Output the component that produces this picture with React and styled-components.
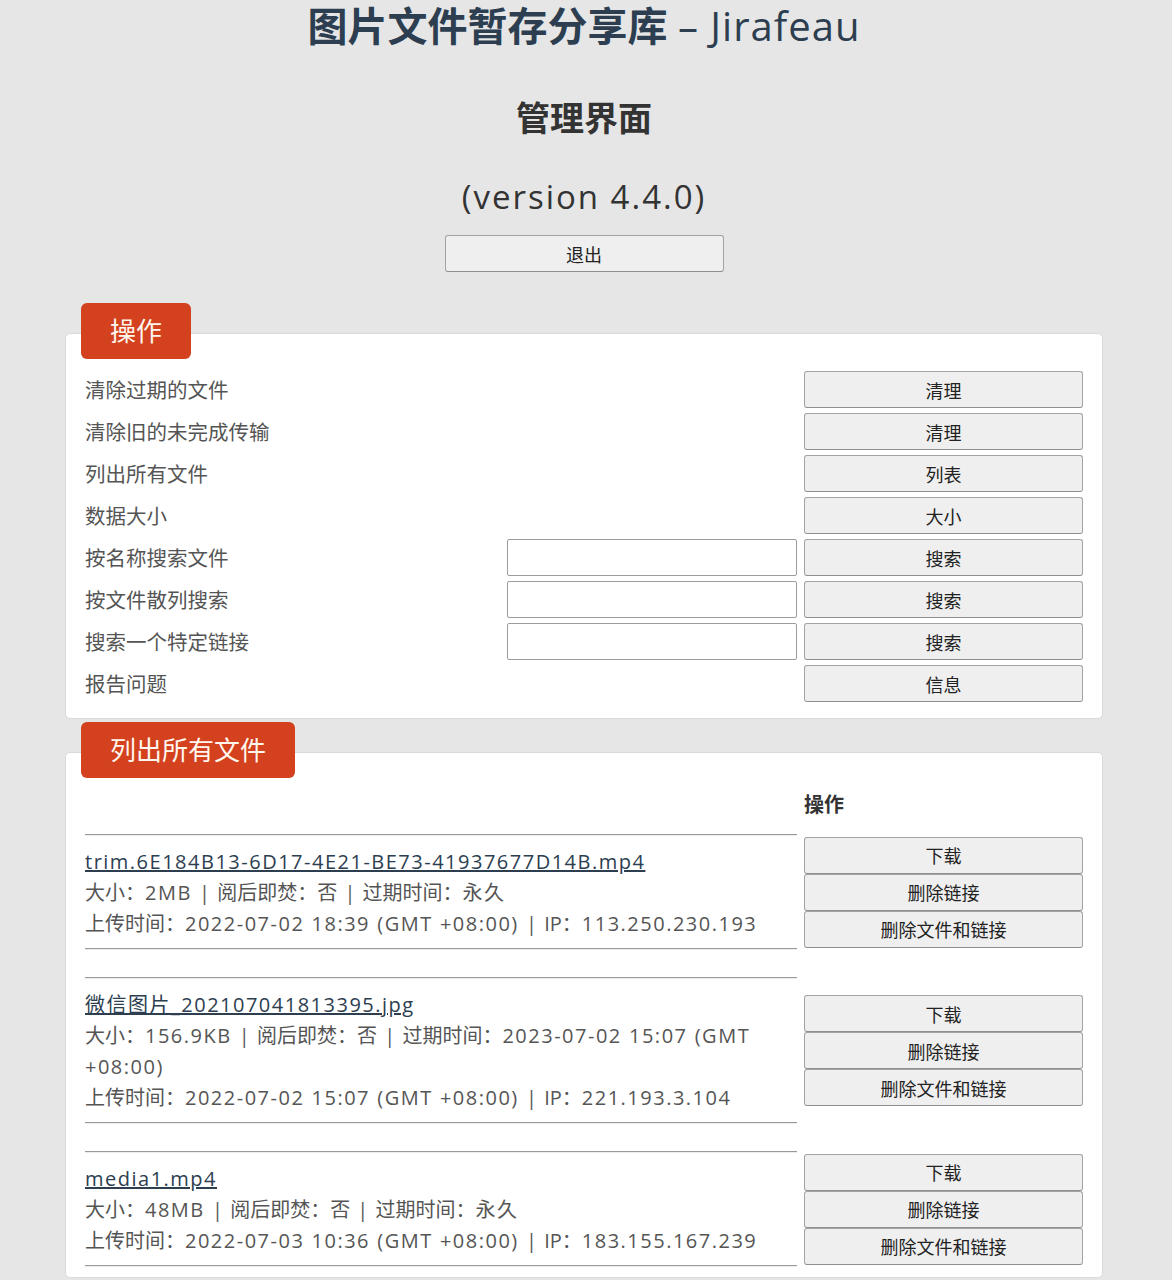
import React from "react";
import styled, { createGlobalStyle } from "styled-components";

const GlobalStyle = createGlobalStyle`
  html, body {
    margin: 0;
    padding: 0;
    background: #e6e6e6;
  }
  body {
    font-family: "Open Sans", "Noto Sans CJK SC", sans-serif;
    color: #555;
  }
`;

const Page = styled.div`
  width: 1038px;
  margin-left: 65px;
  padding-top: 2px;
`;

const Title = styled.h1`
  margin: 0;
  text-align: center;
  font-size: 40px;
  line-height: 48px;
  font-weight: 700;
  color: #2c3e50;
`;

const TitleLatin = styled.span`
  font-weight: 400;
  letter-spacing: 1px;
`;

const SubTitle = styled.h2`
  margin: 48px 0 0;
  text-align: center;
  font-size: 34px;
  line-height: 40px;
  font-weight: 700;
  color: #333;
`;

const Version = styled.h2`
  margin: 39px 0 0;
  text-align: center;
  font-size: 33px;
  line-height: 40px;
  font-weight: 400;
  letter-spacing: 2px;
  color: #333;
`;

const Button = styled.button`
  display: block;
  box-sizing: border-box;
  width: 279px;
  height: 37px;
  padding: 0;
  background: #efefef;
  border: 1px solid #a3a3a3;
  border-bottom-color: #8f8f8f;
  border-radius: 3px;
  font-family: inherit;
  font-size: 18px;
  color: #222;
  cursor: pointer;
`;

const Logout = styled(Button)`
  margin: 18px auto 0;
`;

const Section = styled.section`
  margin-top: ${(p) => p.$gap}px;
`;

const Legend = styled.div`
  display: inline-block;
  position: relative;
  z-index: 1;
  margin-left: 16px;
  height: 56px;
  line-height: 56px;
  padding: 0 29px;
  background: #d3411e;
  color: #fff6ee;
  font-size: 26px;
  border-radius: 6px;
`;

const Panel = styled.div`
  margin-top: -26px;
  background: #fff;
  border: 1px solid #d9d9d9;
  border-radius: 5px;
  padding: 37px 19px ${(p) => p.$bottom}px;
`;

const OpsGrid = styled.div`
  display: grid;
  grid-template-columns: 1fr 290px 279px;
  column-gap: 7px;
  row-gap: 5px;
  align-items: center;
`;

const OpsLabel = styled.div`
  grid-column: 1;
  font-size: 20.5px;
  color: #555;
  margin-top: -1px;
`;

const SearchInput = styled.input`
  grid-column: 2;
  box-sizing: border-box;
  width: 100%;
  height: 37px;
  border: 1px solid #9c9c9c;
  border-radius: 2px;
  background: #fff;
`;

const OpsButton = styled(Button)`
  grid-column: 3;
`;

const FileTable = styled.div`
  display: grid;
  grid-template-columns: 712px 279px;
  column-gap: 7px;
  align-items: center;
`;

const HeadCell = styled.div`
  grid-column: 2;
  font-size: 20px;
  line-height: 30px;
  font-weight: 700;
  color: #333;
  margin-bottom: 14px;
`;

const FileCell = styled.div`
  grid-column: 1;
  margin-bottom: 27px;

  &:nth-last-child(2) {
    margin-bottom: 0;
  }
`;

const Rule = styled.hr`
  margin: 0;
  height: 0;
  border: 0;
  border-top: 1px solid #9a9a9a;
  border-bottom: 1px solid #ececec;
`;

const FileInfo = styled.div`
  padding: 10px 0 9px;
  font-size: 20px;
  line-height: 31px;
  word-spacing: 2px;
  color: #555;
`;

const FileLink = styled.a`
  color: #2c3e50;
  text-decoration: underline;
  letter-spacing: 1.5px;
`;

const Value = styled.span`
  letter-spacing: 1.5px;
`;

const ActionStack = styled.div`
  grid-column: 2;
  display: flex;
  flex-direction: column;
  margin-bottom: 27px;

  &:last-child {
    margin-bottom: 0;
  }
`;

const operations = [
  { label: "清除过期的文件", action: "清理" },
  { label: "清除旧的未完成传输", action: "清理" },
  { label: "列出所有文件", action: "列表" },
  { label: "数据大小", action: "大小" },
  { label: "按名称搜索文件", action: "搜索", input: true },
  { label: "按文件散列搜索", action: "搜索", input: true },
  { label: "搜索一个特定链接", action: "搜索", input: true },
  { label: "报告问题", action: "信息" },
];

const files = [
  {
    name: "trim.6E184B13-6D17-4E21-BE73-41937677D14B.mp4",
    size: "2MB",
    expire: "永久",
    upload: "2022-07-02 18:39 (GMT +08:00)",
    ip: "113.250.230.193",
  },
  {
    name: "微信图片_202107041813395.jpg",
    size: "156.9KB",
    expire: "2023-07-02 15:07 (GMT +08:00)",
    upload: "2022-07-02 15:07 (GMT +08:00)",
    ip: "221.193.3.104",
  },
  {
    name: "media1.mp4",
    size: "48MB",
    expire: "永久",
    upload: "2022-07-03 10:36 (GMT +08:00)",
    ip: "183.155.167.239",
  },
];

const Words = ({ text }) =>
  text.split(" ").map((w, i) => (
    <React.Fragment key={i}>
      {i > 0 && " "}
      <Value>{w}</Value>
    </React.Fragment>
  ));

export default function App() {
  return (
    <>
      <GlobalStyle />
      <Page>
        <Title>
          图片文件暂存分享库 <TitleLatin>– Jirafeau</TitleLatin>
        </Title>
        <SubTitle>管理界面</SubTitle>
        <Version>(version 4.4.0)</Version>
        <Logout>退出</Logout>

        <Section $gap={31}>
          <Legend>操作</Legend>
          <Panel $bottom={16}>
            <OpsGrid>
              {operations.map((op, i) => (
                <React.Fragment key={i}>
                  <OpsLabel>{op.label}</OpsLabel>
                  {op.input && <SearchInput type="text" />}
                  <OpsButton>{op.action}</OpsButton>
                </React.Fragment>
              ))}
            </OpsGrid>
          </Panel>
        </Section>

        <Section $gap={3}>
          <Legend>列出所有文件</Legend>
          <Panel $bottom={10}>
            <FileTable>
              <HeadCell>操作</HeadCell>
              {files.map((f) => (
                <React.Fragment key={f.name}>
                  <FileCell>
                    <Rule />
                    <FileInfo>
                      <FileLink href="#">{f.name}</FileLink>
                      <br />
                      大小：<Value>{f.size}</Value> | 阅后即焚：否 | 过期时间：
                      <Words text={f.expire} />
                      <br />
                      上传时间：<Words text={f.upload} /> | IP：
                      <Value>{f.ip}</Value>
                    </FileInfo>
                    <Rule />
                  </FileCell>
                  <ActionStack>
                    <Button>下载</Button>
                    <Button>删除链接</Button>
                    <Button>删除文件和链接</Button>
                  </ActionStack>
                </React.Fragment>
              ))}
            </FileTable>
          </Panel>
        </Section>
      </Page>
    </>
  );
}
